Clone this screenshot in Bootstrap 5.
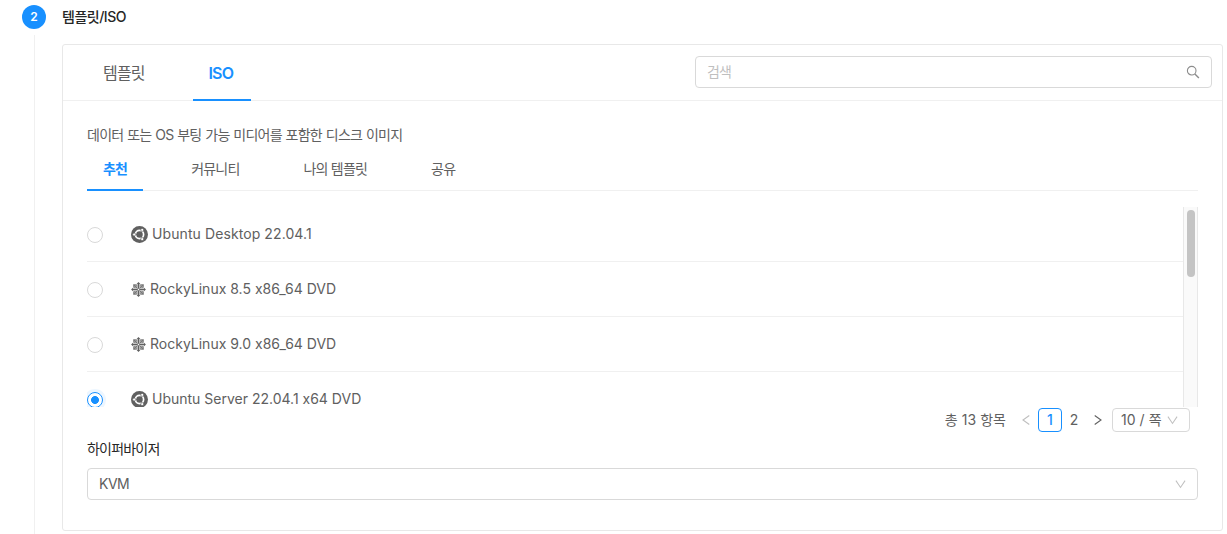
<!DOCTYPE html>
<html lang="ko">
<head>
<meta charset="utf-8">
<meta name="viewport" content="width=device-width, initial-scale=1">
<title>템플릿/ISO</title>
<link href="https://cdn.jsdelivr.net/npm/bootstrap@5.3.0/dist/css/bootstrap.min.css" rel="stylesheet">
<style>
  body{font-family:Inter,"Noto Sans CJK KR",sans-serif;font-size:14px;line-height:22px;color:#606060;background:#fff;overflow:hidden;font-feature-settings:"calt" 0}
  .wizard{height:534px;padding:5px 4px 0 22px}
  .rail{width:24px;margin-right:16px}
  .step-no{width:24px;height:24px;background:#1890ff;color:#fff;font-size:12px;font-weight:600}
  .rail-line{width:1px;background:#f0f0f0;margin-top:6px}
  .step-title{height:24px;color:#262626;font-weight:500;margin-bottom:15px}
  .panel{height:487px;border:1px solid #e8e8e8;border-radius:3px}
  .panel-head{height:56px;border-bottom:1px solid #f0f0f0;padding:0 10px 0 24px}
  .tabs-lg{gap:32px;font-size:16px}
  .tab-item{padding:0 16px;border:0;background:none;color:#606060;white-space:nowrap;margin-bottom:-1px;border-bottom:2px solid transparent}
  .tab-item.active{color:#1890ff;border-bottom-color:#1890ff;font-weight:600}
  .tabs-lg .tab-item{height:56px;padding-top:1px}
  .tabs-lg .tab-item.active{width:58px;padding:2px 16px 0 14px}
  .search-box{width:517px;height:32px;border:1px solid #d9d9d9;border-radius:4px;padding:0 11px;margin-top:11px}
  .search-box input{outline:0;padding:0;color:#606060}
  .search-box input::placeholder{color:#bfbfbf;opacity:1}
  .panel-body{padding:23px 24px 0}
  .tabs-sm{gap:32px;height:45px;border-bottom:1px solid #f0f0f0;margin-bottom:16px}
  .tabs-sm .tab-item{height:45px;padding-top:3px}
  .iso-scroll{height:200px;overflow:hidden}
  .iso-row{height:55px;border-bottom:1px solid #f0f0f0}
  .iso-row input{appearance:none;width:16px;height:16px;border:1px solid #d9d9d9;border-radius:50%;margin:2px 28px 0 0;background:#fff}
  .iso-row input:checked{border-color:#1890ff;background:radial-gradient(circle,#1890ff 3.6px,#fff 4.3px);box-shadow:0 0 0 3px rgba(24,144,255,.08)}
  .iso-bar{width:15px;background:#fafafa;border:solid #e8e8e8;border-width:0 1px;padding:3px 2px 0 3px}
  .iso-thumb{width:8px;height:67px;border-radius:4px;background:#c4c4c4}
  .iso-desktop{letter-spacing:.09px}
  .pager{height:24px;margin:1px 8px 0 0}
  .total{letter-spacing:.05px}
  .size-text{letter-spacing:.05px}
  .pg{width:24px;height:24px;border-radius:4px}
  .pg.current{border:1px solid #1890ff;color:#1890ff;font-weight:500}
  .size-pick{width:78px;height:24px;border:1px solid #d9d9d9;border-radius:4px;padding:0 11px 0 8px;margin-left:2px}
  .hv-label{color:#262626;margin:6px 0 8px}
  .hv-select{height:32px;border:1px solid #d9d9d9;border-radius:4px;padding:0 11px}
  .hv-select span{letter-spacing:-.5px}
  .ko{letter-spacing:-.8px}
  .ko-desc{letter-spacing:-.75px;word-spacing:.6px}
  .t-title{letter-spacing:-.5px}
</style>
</head>
<body>
<svg class="d-none">
  <symbol id="ubuntu" viewBox="0 0 17 17">
    <circle cx="8.5" cy="8.5" r="8.5" fill="#606060"/>
    <circle cx="8.5" cy="8.5" r="4.1" fill="none" stroke="#fff" stroke-width="1.7"/>
    <g stroke="#606060" stroke-width=".6">
      <path d="M8.5 8.5H2M8.5 8.5l3.2-5.6M8.5 8.5l3.2 5.6" stroke-width=".7"/>
      <circle cx="3.2" cy="8.5" r="1.5" fill="#fff"/>
      <circle cx="11.2" cy="3.9" r="1.5" fill="#fff"/>
      <circle cx="11.2" cy="13.1" r="1.5" fill="#fff"/>
    </g>
  </symbol>
  <symbol id="pinwheel" viewBox="-7.5 -7.5 15 15">
    <g fill="#606060">
      <g id="pw-arm">
        <path d="M0-7.4L2.1-5.3H.5V-.7H-.5V-5.3H-2.1z"/>
        <path d="M2-5.3H5.3V-2L4.3-3L1.3-.4L.4-1.3L3-4.3z" opacity=".85"/>
        <path d="M.9-5H2.2L2.7-4.3L.9-2zM5-.9V-2.2L4.3-2.7L2-.9z" opacity=".75"/>
      </g>
      <use href="#pw-arm" transform="rotate(90)"/>
      <use href="#pw-arm" transform="rotate(180)"/>
      <use href="#pw-arm" transform="rotate(270)"/>
    </g>
  </symbol>
  <symbol id="chev-down" viewBox="0 0 12 12"><path d="M1 1.8L6 9.2l5-7.4" fill="none" stroke="#bfbfbf" stroke-width="1.1"/></symbol>
</svg>
<main class="wizard d-flex">
  <div class="rail d-flex flex-column align-items-center flex-shrink-0">
    <div class="step-no rounded-circle d-flex align-items-center justify-content-center flex-shrink-0">2</div>
    <div class="rail-line flex-grow-1"></div>
  </div>
  <section class="flex-grow-1">
    <div class="step-title d-flex align-items-center"><span class="t-title">템플릿/ISO</span></div>
    <div class="panel">
      <div class="panel-head d-flex justify-content-between">
        <div class="tabs-lg d-flex">
          <button class="tab-item ko">템플릿</button>
          <button class="tab-item active ko">ISO</button>
        </div>
        <div class="search-box d-flex align-items-center">
          <input class="border-0 flex-grow-1 ko" type="text" placeholder="검색">
          <svg width="14" height="14" viewBox="0 0 14 14" fill="none" stroke="#8c8c8c" stroke-width="1.1"><circle cx="5.7" cy="5.7" r="4.3"/><path d="M8.9 8.9l4 4" stroke-width="1.4"/></svg>
        </div>
      </div>
      <div class="panel-body">
        <div class="ko-desc">데이터 또는 OS 부팅 가능 미디어를 포함한 디스크 이미지</div>
        <div class="tabs-sm d-flex">
          <button class="tab-item active ko">추천</button>
          <button class="tab-item ko">커뮤니티</button>
          <button class="tab-item ko">나의 템플릿</button>
          <button class="tab-item ko">공유</button>
        </div>
        <div class="iso-scroll d-flex">
          <div class="flex-grow-1">
            <label class="iso-row d-flex align-items-center"><input type="radio" name="iso"><svg class="me-1" width="17" height="17"><use href="#ubuntu"/></svg><span class="iso-desktop">Ubuntu Desktop 22.04.1</span></label>
            <label class="iso-row d-flex align-items-center"><input type="radio" name="iso"><svg class="me-1" width="15" height="15"><use href="#pinwheel"/></svg><span>RockyLinux 8.5 x86_64 DVD</span></label>
            <label class="iso-row d-flex align-items-center"><input type="radio" name="iso"><svg class="me-1" width="15" height="15"><use href="#pinwheel"/></svg><span>RockyLinux 9.0 x86_64 DVD</span></label>
            <label class="iso-row d-flex align-items-center"><input type="radio" name="iso" checked><svg class="me-1" width="17" height="17"><use href="#ubuntu"/></svg><span>Ubuntu Server 22.04.1 x64 DVD</span></label>
          </div>
          <div class="iso-bar"><div class="iso-thumb"></div></div>
        </div>
        <div class="pager d-flex justify-content-end align-items-center">
          <span class="me-2 total">총 13 항목</span>
          <span class="pg d-flex align-items-center justify-content-center"><svg width="8" height="12" fill="none" stroke="#bfbfbf" stroke-width="1.1"><path d="M7.3 1.5L1 6l6.3 4.5"/></svg></span>
          <span class="pg current d-flex align-items-center justify-content-center">1</span>
          <span class="pg d-flex align-items-center justify-content-center">2</span>
          <span class="pg d-flex align-items-center justify-content-center"><svg width="8" height="12" fill="none" stroke="#606060" stroke-width="1.1"><path d="M.7 1.5L7 6 .7 10.5"/></svg></span>
          <span class="size-pick d-flex align-items-center justify-content-between"><span class="text-nowrap size-text">10 / 쪽</span><svg width="11" height="11"><use href="#chev-down"/></svg></span>
        </div>
        <div class="hv-label ko">하이퍼바이저</div>
        <div class="hv-select d-flex align-items-center justify-content-between"><span>KVM</span><svg width="11" height="11"><use href="#chev-down"/></svg></div>
      </div>
    </div>
  </section>
</main>
<script src="https://cdn.jsdelivr.net/npm/bootstrap@5.3.0/dist/js/bootstrap.bundle.min.js"></script>
</body>
</html>
